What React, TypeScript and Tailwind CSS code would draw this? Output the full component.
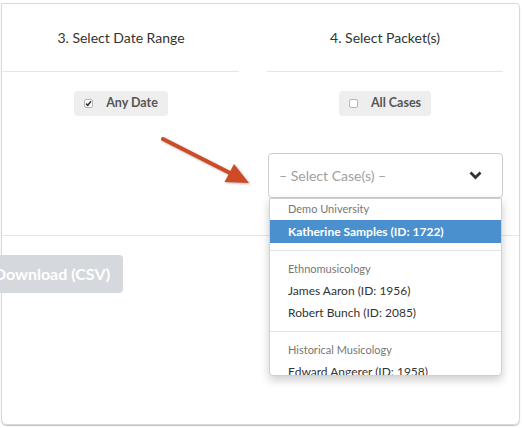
import React from 'react';

const font = { fontFamily: 'Lato, "Open Sans", sans-serif' };

function CheckBox({ checked }: { checked?: boolean }) {
  return (
    <span className="w-[9px] h-[9px] rounded-[2px] border border-[#b5b5b5] bg-white flex items-center justify-center">
      {checked && (
        <svg width="7" height="7" viewBox="0 0 7 7">
          <path d="M1 3.6 L2.8 5.3 L6 1.2" fill="none" stroke="#333" strokeWidth="1.5" />
        </svg>
      )}
    </span>
  );
}

function Toggle({ label, checked }: { label: string; checked?: boolean }) {
  return (
    <div className="h-[25px] flex items-center gap-[13px] px-[10px] rounded-[4px] bg-[#eeeeee]">
      <CheckBox checked={checked} />
      <span className="text-[12.5px] font-bold text-[#555]">{label}</span>
    </div>
  );
}

const groups = [
  { name: 'Demo University', items: ['Katherine Samples (ID: 1722)'] },
  { name: 'Ethnomusicology', items: ['James Aaron (ID: 1956)', 'Robert Bunch (ID: 2085)'] },
  { name: 'Historical Musicology', items: ['Edward Angerer (ID: 1958)', 'Jane Doe (ID: 1960)'] },
];

export default function App() {
  return (
    <div className="w-[522px] h-[428px] bg-white overflow-hidden relative" style={font}>
      <div className="ml-[1px] mt-[3px] w-[519px] h-[422px] border border-[#d9d9d9] rounded-b-[6px] rounded-tr-[4px] shadow-[0_1px_1px_rgba(0,0,0,0.25)] relative">
        <div className="flex">
          <div className="w-[236px] ml-[1px] flex flex-col items-center">
            <div className="w-full h-[68px] flex items-center justify-center border-b border-[#e6e6e6] text-[14px] text-[#333]">
              3. Select Date Range
            </div>
            <div className="mt-[19px]">
              <Toggle label="Any Date" checked />
            </div>
          </div>
          <div className="w-[236px] ml-[28px] flex flex-col items-center">
            <div className="w-full h-[68px] flex items-center justify-center border-b border-[#e6e6e6] text-[14px] text-[#333]">
              4. Select Packet(s)
            </div>
            <div className="mt-[19px]">
              <Toggle label="All Cases" />
            </div>
            <div className="relative w-full mt-[37px]">
              <div className="h-[45px] w-[235px] ml-[1px] border border-[#cccccc] rounded-[4px] flex items-center justify-between pl-[10px] pr-[20px]">
                <span className="text-[14px] text-[#a0a0a0]">– Select Case(s) –</span>
                <svg width="13" height="9" viewBox="0 0 13 9">
                  <path d="M1.5 1.5 L6.5 6.5 L11.5 1.5" fill="none" stroke="#333" strokeWidth="2.8" />
                </svg>
              </div>
              <div className="absolute left-[2px] top-[45px] w-[233px] h-[178px] overflow-hidden bg-white border border-[#d0d0d0] rounded-b-[4px] shadow-[0_4px_10px_rgba(0,0,0,0.2)] z-10">
                {groups.map((g, gi) => (
                  <div key={g.name} className={gi > 0 ? 'border-t border-[#e3e3e3] mt-[7px] pt-[8px]' : ''}>
                    <div className="h-[21px] flex items-center pl-[18px] text-[11px] text-[#777]">{g.name}</div>
                    {g.items.map((it, ii) => (
                      <div
                        key={it}
                        className={
                          'flex items-center pl-[18px] text-[12px] ' +
                          (gi === 0 && ii === 0 ? 'bg-[#4a90cf] text-white font-bold h-[23px]' : 'text-[#333] h-[22px]')
                        }
                      >
                        {it}
                      </div>
                    ))}
                  </div>
                ))}
              </div>
            </div>
          </div>
        </div>
        <div className="mt-[37px] border-t border-[#e6e6e6]" />
        <div className="mt-[19px] -ml-[21px] w-[142px] h-[38px] rounded-[4px] bg-[#d5d8dd] flex items-center justify-center text-white text-[16px] font-bold">
          Download (CSV)
        </div>
        <svg className="absolute left-[-2px] top-[-4px] pointer-events-none" width="522" height="428" style={{ filter: 'drop-shadow(1px 1px 1px rgba(0,0,0,0.3))' }}>
          <line x1="163" y1="139" x2="232" y2="174" stroke="#cd4b25" strokeWidth="4" strokeLinecap="round" />
          <polygon points="249,183 224.5,182 234,164" fill="#cd4b25" />
        </svg>
      </div>
    </div>
  );
}
